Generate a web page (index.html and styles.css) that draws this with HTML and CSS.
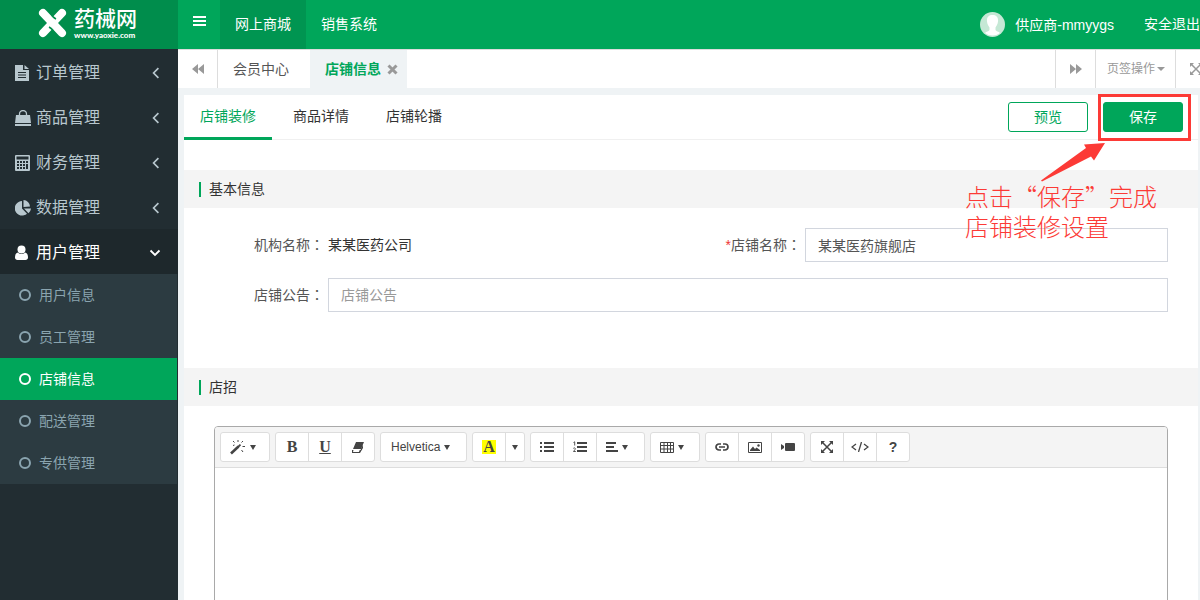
FILE: index.html
```html
<!DOCTYPE html>
<html lang="zh-CN">
<head>
<meta charset="utf-8">
<title>店铺信息</title>
<link rel="stylesheet" href="styles.css">
</head>
<body>
<svg class="defs" aria-hidden="true">
  <symbol id="left" viewBox="0 0 8 10"><path d="M6 1L2 5l4 4" fill="none" stroke="currentColor" stroke-width="1.400"/></symbol>
  <symbol id="down" viewBox="0 0 12 8"><path d="M1.500 1.500L6 6l4.500-4.500" fill="none" stroke="currentColor" stroke-width="1.800"/></symbol>
  <symbol id="caret" viewBox="0 0 8 4"><path d="M0 0h8L4 4z"/></symbol>
  <symbol id="tri" viewBox="0 0 6 5"><path d="M0 0h6L3 5z"/></symbol>
  <symbol id="expand" viewBox="0 0 12 12"><path d="M0 0h4L0 4zM12 0v4L8 0zM0 12V8l4 4zM12 12H8l4-4z"/><path d="M1.500 1.500l9 9M10.500 1.500l-9 9" stroke="currentColor" stroke-width="1.500"/></symbol>
</svg>
<div class="app">
  <aside class="sidebar">
    <a class="logo" href="#">
      <svg class="logo-mark" viewBox="0 0 30 30"><g stroke="#fff" stroke-width="8" stroke-linecap="round"><path d="M5 5l19 20"/><path d="M24 5L5 25"/></g><path d="M13 5q1 4 5 6M11 19q4 2 5 6" fill="none" stroke="#008d4c" stroke-width="1.500"/></svg>
      <span class="logo-text"><span class="logo-name">药械网</span><span class="logo-url">www.yaoxie.com</span></span>
    </a>
    <nav class="menu">
      <a class="item" href="#"><svg class="mi" viewBox="0 0 16 16"><path d="M0 0h8v5h6v11H0zM9.500 0L14 4H9.500z"/><path d="M3 7.500h8M3 10h8M3 12.500h8" stroke="#222d32"/></svg><span>订单管理</span><svg class="chev"><use href="#left"/></svg></a>
      <a class="item" href="#"><svg class="mi" viewBox="0 0 16 16"><path d="M1 5h14l1 8H0zM0 14h16v2H0z"/><path d="M4.500 7.500V4a3.500 3.500 0 0 1 7 0v3.500" fill="none" stroke="currentColor" stroke-width="1.300"/></svg><span>商品管理</span><svg class="chev"><use href="#left"/></svg></a>
      <a class="item" href="#"><svg class="mi" viewBox="0 0 16 16"><path fill-rule="evenodd" d="M1 0h13a1 1 0 0 1 1 1v14a1 1 0 0 1-1 1H1a1 1 0 0 1-1-1V1a1 1 0 0 1 1-1zM1.500 1.500v3h12v-3zM2 6v2h2V6zm3 0v2h2V6zm3 0v2h2V6zm3 0v2h2V6zM2 9v2h2V9zm3 0v2h2V9zm3 0v2h2V9zm3 0v5h2V9zM2 12v2h2v-2zm3 0v2h2v-2zm3 0v2h2v-2z"/></svg><span>财务管理</span><svg class="chev"><use href="#left"/></svg></a>
      <a class="item" href="#"><svg class="mi" viewBox="0 0 16 16"><path d="M7 1v7.500l5 5.200A7.300 7.300 0 1 1 7 1z"/><path d="M8.500 0A7 7 0 0 1 15 6.500L8.500 7z"/><path d="M9 8.500h7a7 7 0 0 1-2.500 4.700z"/></svg><span>数据管理</span><svg class="chev"><use href="#left"/></svg></a>
      <a class="item open" href="#"><svg class="mi" viewBox="0 0 16 16"><circle cx="6.500" cy="4.500" r="4"/><path d="M3 7.500c2 2 5 2 7 0 2.500.5 3 3 3 5 0 1.500-1 2.500-2.500 2.500h-8C1 15 0 14 0 12.500c0-2 .5-4.500 3-5z"/></svg><span>用户管理</span><svg class="chev-down"><use href="#down"/></svg></a>
      <div class="submenu">
        <a href="#"><i class="ring"></i>用户信息</a>
        <a href="#"><i class="ring"></i>员工管理</a>
        <a class="current" href="#"><i class="ring"></i>店铺信息</a>
        <a href="#"><i class="ring"></i>配送管理</a>
        <a href="#"><i class="ring"></i>专供管理</a>
      </div>
    </nav>
  </aside>
  <div class="content">
    <header class="topbar">
      <button class="toggle" aria-label="菜单"><svg viewBox="0 0 13 12"><path d="M0 2h13M0 6h13M0 10h13" stroke="#fff" stroke-width="2"/></svg></button>
      <a class="top-link on" href="#">网上商城</a>
      <a class="top-link" href="#">销售系统</a>
      <a class="user" href="#"><svg class="avatar" viewBox="0 0 25 25"><circle cx="12.500" cy="12.500" r="12.500" fill="#c5e8d5"/><path d="M12.500 3c4 0 6 2.500 5.500 6.500-.3 3-1.500 4.500-2.500 6v2.500c1 1.500 3 1.500 4.500 3a12.500 12.500 0 0 1-15 0c1.500-1.500 3.500-1.500 4.500-3v-2.500c-1-1.500-2.200-3-2.500-6C6.500 5.500 8.500 3 12.500 3z" fill="#fff"/></svg>供应商-mmyygs</a>
      <a class="logout" href="#">安全退出</a>
    </header>
    <div class="tabbar">
      <button class="roll first" aria-label="左移"><svg viewBox="0 0 12 10"><path d="M6 0v10L0 5zM12 0v10L6 5z"/></svg></button>
      <a class="page-tab" href="#">会员中心</a>
      <a class="page-tab active" href="#">店铺信息<svg class="close" viewBox="0 0 11 11"><path d="M1.500 1.500l8 8M9.500 1.500l-8 8" stroke="#999" stroke-width="3"/></svg></a>
      <span class="fill"></span>
      <button class="roll" aria-label="右移"><svg viewBox="0 0 12 10"><path d="M6 0v10l6-5zM0 0v10l6-5z"/></svg></button>
      <button class="ops">页签操作<svg><use href="#caret"/></svg></button>
      <button class="full" aria-label="全屏"><svg><use href="#expand"/></svg></button>
    </div>
    <main class="panel">
      <div class="panel-head">
        <a class="ptab active" href="#">店铺装修</a>
        <a class="ptab" href="#">商品详情</a>
        <a class="ptab" href="#">店铺轮播</a>
        <div class="actions">
          <button class="btn">预览</button>
          <div class="save-wrap">
            <button class="btn primary">保存</button>
            <div class="mark"></div>
            <svg class="arrow" viewBox="0 0 66 40"><path d="M1 37.500L46 5l-2-3.500L65 0 54 17.500l-3-4L2 38.500z" fill="#fc3a36"/></svg>
            <p class="note">点击“保存”完成<br>店铺装修设置</p>
          </div>
        </div>
      </div>
      <h2 class="section">基本信息</h2>
      <form class="form">
        <span class="label">机构名称<span class="colon" lang="zh-TW">：</span></span>
        <span class="value">某某医药公司</span>
        <label class="label" for="shop"><span class="req">*</span>店铺名称<span class="colon" lang="zh-TW">：</span></label>
        <input id="shop" type="text" value="某某医药旗舰店">
        <label class="label" for="notice">店铺公告<span class="colon" lang="zh-TW">：</span></label>
        <input id="notice" class="wide" type="text" placeholder="店铺公告">
      </form>
      <h2 class="section">店招</h2>
      <div class="editor">
        <div class="toolbar">
          <div class="group"><button class="w-drop" aria-label="样式"><svg width="16" height="15" viewBox="0 0 16 15"><path d="M1 13.500l7.500-7" stroke="currentColor" stroke-width="2.600"/><path d="M8 7l2.500-2.300" stroke="currentColor" stroke-width="1.800"/><path d="M3 1l1.500 1.500M8 0v2M13 1l-1.500 1.500M12.500 6.500H15M11.500 10l1.500 2M3 5.500L4.500 5" stroke="currentColor"/></svg><svg class="tri"><use href="#tri"/></svg></button></div>
          <div class="group"><button class="serif">B</button><button class="serif under">U</button><button aria-label="清除"><svg width="12" height="11" viewBox="0 0 12 11"><path d="M4 0h8L9 7H1zM0 8h8.500L11 3v3L8 11H0z"/><path d="M1.500 8h6.200l-.8 2H1z" fill="#fff"/></svg></button></div>
          <div class="group"><button class="w-font">Helvetica<svg class="tri"><use href="#tri"/></svg></button></div>
          <div class="group"><button class="serif"><span class="hl">A</span></button><button class="w-caret" aria-label="颜色"><svg class="tri"><use href="#tri"/></svg></button></div>
          <div class="group"><button aria-label="列表"><svg width="14" height="10" viewBox="0 0 14 10"><path d="M0 1h2M0 5h2M0 9h2M4 1h10M4 5h10M4 9h10" stroke="currentColor" stroke-width="2"/></svg></button><button aria-label="编号"><svg width="14" height="12" viewBox="0 0 14 12"><path d="M4 2h10M4 6h10M4 10h10" stroke="currentColor" stroke-width="2"/><path d="M.5 1.500L1.700.8V4.500M.3 7.500c1-1.300 2.800-.3 1.700 1L.5 10.500h2.300" fill="none" stroke="currentColor" stroke-width=".9"/></svg></button><button class="w-drop" aria-label="对齐"><svg width="12" height="10" viewBox="0 0 12 10"><path d="M0 1h10M0 5h8M0 9h12" stroke="currentColor" stroke-width="2"/></svg><svg class="tri"><use href="#tri"/></svg></button></div>
          <div class="group"><button class="w-drop" aria-label="表格"><svg width="14" height="11" viewBox="0 0 14 11"><path d="M.5.5h13v10H.5zM.5 3.500h13M.5 7h13M4 .5v10M7.500.5v10M10.500.5v10" fill="none" stroke="currentColor"/></svg><svg class="tri"><use href="#tri"/></svg></button></div>
          <div class="group"><button aria-label="链接"><svg width="14" height="8" viewBox="0 0 14 8"><path d="M6 1H4a3 3 0 0 0 0 6h2M8 1h2a3 3 0 0 1 0 6H8M4 4h6" fill="none" stroke="currentColor" stroke-width="1.700"/></svg></button><button aria-label="图片"><svg width="14" height="11" viewBox="0 0 14 11"><path d="M.5.500h13v10H.5z" fill="none" stroke="currentColor"/><path d="M2 9V8l3-3.500L7 7l1.500-1.500L12 8v1z"/><circle cx="10.500" cy="3.500" r="1.200"/></svg></button><button aria-label="视频"><svg width="14" height="8" viewBox="0 0 14 8"><rect x="4" width="10" height="8" rx="1"/><path d="M0 1l3 2v2L0 7z"/></svg></button></div>
          <div class="group"><button aria-label="全屏"><svg width="12" height="12"><use href="#expand"/></svg></button><button aria-label="代码"><svg width="18" height="10" viewBox="0 0 18 10"><path d="M5 2L1 5l4 3M13 2l4 3-4 3M10.500 0l-3 10" fill="none" stroke="currentColor" stroke-width="1.300"/></svg></button><button class="help">?</button></div>
        </div>
        <div class="edit-area"></div>
      </div>
    </main>
  </div>
</div>
</body>
</html>
```
FILE: styles.css
```css
* { box-sizing: border-box; }
body {
  margin: 0;
  font: 14px/20px "Liberation Sans", "Noto Sans CJK SC", sans-serif;
  color: #333;
  background: #eff3f5;
}
a { color: inherit; text-decoration: none; }
button, input { font: inherit; color: inherit; }
button { margin: 0; padding: 0; border: 0; background: none; cursor: pointer; }
svg { fill: currentColor; flex: none; }
.defs { display: none; }
.app { display: flex; height: 100vh; overflow: hidden; }

.sidebar { flex: none; width: 178px; background: #222d32; }
.logo { display: flex; gap: 6px; height: 49px; padding: 8px 0 0 38px; background: #008d4c; color: #fff; }
.logo-mark { width: 30px; height: 30px; }
.logo-text { display: flex; flex-direction: column; }
.logo-name { font-size: 21px; line-height: 22px; font-weight: 500; }
.logo-url { font: 900 8px/10px Lato, sans-serif; }
.item { display: flex; align-items: center; height: 45px; padding: 2px 17px 0 15px; font-size: 16px; color: #b8c7ce; }
.item span { flex: 1; margin-left: 5px; }
.item.open { background: #1e282c; color: #fff; }
.mi { width: 16px; height: 16px; }
.chev { width: 10px; height: 12px; }
.chev-down { width: 12px; height: 8px; }
.submenu { margin-right: 1px; background: #2c3b41; color: #8aa4af; }
.submenu a { display: flex; align-items: center; gap: 8px; height: 42px; padding-left: 19px; }
.submenu .current { background: #00a65a; color: #fff; }
.ring { width: 12px; height: 12px; border: 2px solid; border-radius: 50%; }

.content { flex: 1; min-width: 0; display: flex; flex-direction: column; }
.topbar { display: flex; flex: none; height: 49px; background: #00a65a; color: #fff; overflow: hidden; white-space: nowrap; }
.toggle { width: 42px; padding-bottom: 6px; }
.toggle svg { width: 13px; height: 12px; }
.top-link { padding: 14px 15px; }
.top-link.on { background: #009551; }
.user { display: flex; align-items: center; gap: 10px; margin-left: auto; }
.avatar { width: 25px; height: 25px; }
.logout { padding: 14px 0 0 30px; }

.tabbar { display: flex; flex: none; height: 39px; border-top: 1px solid #ddd; background: #fff; overflow: hidden; color: #999; }
.roll { width: 40px; border-left: 1px solid #ddd; }
.roll.first { border-left: 0; border-right: 1px solid #ddd; }
.roll svg { width: 12px; height: 10px; }
.page-tab { padding: 9px 21px 0 15px; color: #555; }
.page-tab.active { display: flex; gap: 6px; padding-right: 9px; background: #eff3f5; color: #00a65a; font-weight: bold; }
.close { width: 11px; height: 11px; margin-top: 5px; }
.fill { flex: 1; }
.ops { display: flex; align-items: center; gap: 2px; width: 80px; padding-left: 11px; border-left: 1px solid #ddd; font-size: 12px; white-space: nowrap; }
.ops svg { width: 8px; height: 4px; }
.full { width: 25px; padding-left: 14px; border-left: 1px solid #ddd; overflow: hidden; }
.full svg { display: block; width: 12px; height: 12px; }

.panel { flex: 1; margin: 7px 2px 0 6px; background: #fff; }
.panel-head { display: flex; gap: 5px; height: 45px; border-bottom: 1px solid #f0f0f0; }
.ptab { height: 45px; padding: 11px 16px 0; }
.ptab.active { border-bottom: 3px solid #00a65a; color: #00a65a; }
.actions { display: flex; gap: 15px; margin-left: auto; padding: 7px 15px 0 0; }
.btn { display: block; width: 80px; height: 30px; border: 1px solid #00a65a; border-radius: 3px; background: #fff; color: #00a65a; }
.btn.primary { background: #00a65a; color: #fff; }
.save-wrap { position: relative; }
.mark { position: absolute; inset: -8px -8px auto -5px; height: 47px; border: 3px solid #fc3a36; pointer-events: none; }
.arrow { position: absolute; top: 41px; left: -63px; width: 66px; height: 40px; }
.note { position: absolute; top: 79px; left: -138px; margin: 0; font: 300 24px/30px "Noto Sans CJK SC", sans-serif; color: #fc3a36; white-space: nowrap; pointer-events: none; }

.section { display: flex; align-items: center; gap: 8px; height: 38px; margin: 30px 0 0; padding-left: 15px; background: #f4f4f4; font-size: 14px; font-weight: normal; }
.section::before { content: ""; width: 2px; height: 15px; background: #00a65a; }
.form { display: grid; grid-template-columns: 144px 1fr 114px 1fr; gap: 16px 0; align-items: center; padding: 20px 30px 26px 0; }
.label { padding-right: 4px; text-align: right; color: #555; }
.colon { font-family: "Noto Sans CJK TC", sans-serif; line-height: 1; }
.req { color: #e33; }
.form input { width: 100%; height: 34px; padding: 0 12px; border: 1px solid #d2d6de; border-radius: 0; background: #fff; outline: 0; color: #555; }
.form .wide { grid-column: span 3; }
.form input::placeholder { color: #999; opacity: 1; }

.editor { margin: 20px 30px 0; border: 1px solid #a9a9a9; border-radius: 4px 4px 0 0; overflow: hidden; }
.toolbar { display: flex; gap: 5px; padding: 5px; border-bottom: 1px solid #ddd; background: #f4f4f4; }
.group { display: flex; border: 1px solid #ddd; border-radius: 3px; background: #fff; color: #444; }
.group button { display: flex; align-items: center; justify-content: center; width: 33px; height: 28px; }
.group button:first-child { width: 32px; }
.group button + button { border-left: 1px solid #ddd; }
.group .w-drop, .group .w-drop:first-child { justify-content: flex-start; gap: 4px; width: 48px; padding-left: 9px; }
.group .w-font:first-child { justify-content: flex-start; gap: 4px; width: 85px; padding-left: 10px; font-size: 12px; }
.group .w-caret { width: 19px; }
.tri { width: 6px; height: 5px; }
.group .serif { font: bold 16px/16px "Liberation Serif", serif; }
.group .under { text-decoration: underline; }
.group .help { font-weight: bold; }
.hl { padding: 0 1px; background: #ff0; line-height: 14px; height: 14px; }
.edit-area { height: 300px; }
```
